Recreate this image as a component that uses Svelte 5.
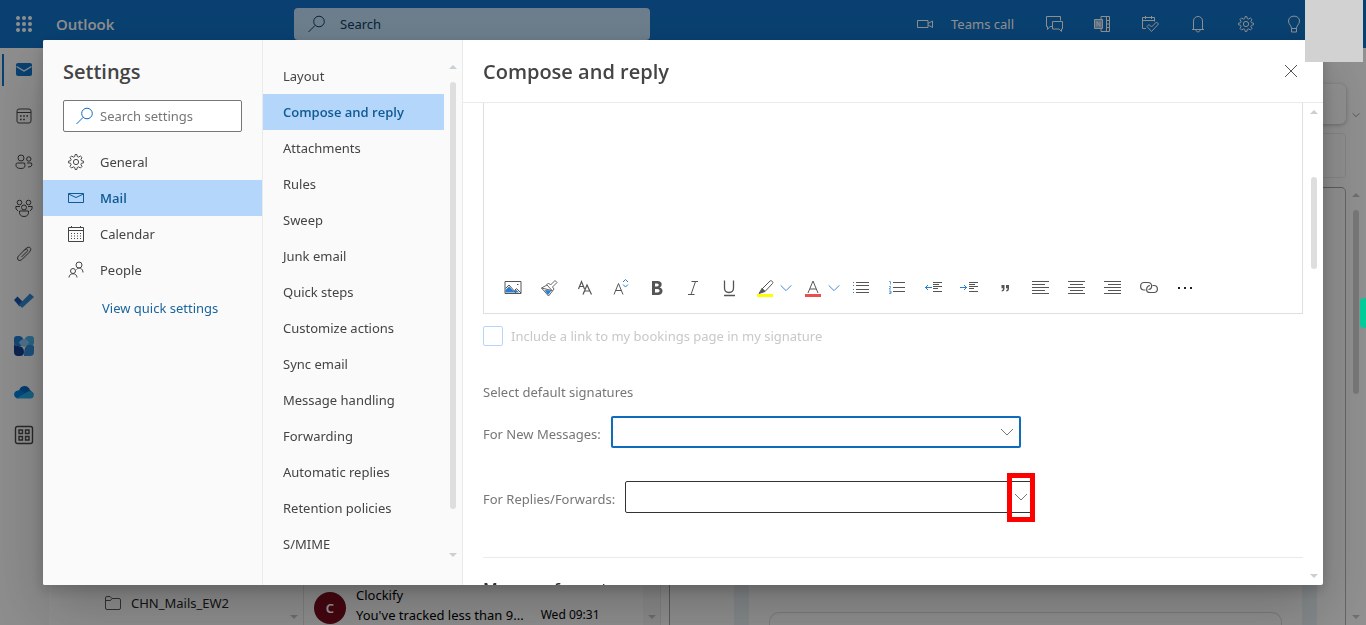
<script lang="ts">
	interface NavItem {
		label: string;
		icon?: string;
	}

	const gear =
		'<path d="M8.2 1.5h1.6l.5 2.1 1.3.5 1.8-1.1 1.6 1.6-1.1 1.8.5 1.3 2.1.5v1.6l-2.1.5-.5 1.3 1.1 1.8-1.6 1.6-1.8-1.1-1.3.5-.5 2.1H8.2l-.5-2.1-1.3-.5-1.8 1.1L3 13.400l1.1-1.8-.5-1.3-2.1-.5V8.200l2.1-.5.5-1.300L3 4.600 4.600 3l1.800 1.100 1.300-.5z"/><circle cx="9" cy="9" r="2.600"/>';

	// Every icon sits on an 18 x 18 grid and inherits its stroke
	const icons: Record<string, string> = {
		gear,
		search: '<circle cx="11" cy="6.500" r="5.300"/><path d="M7.200 10.300 .5 17"/>',
		mail: '<path d="M1.500 4.500h15v9h-15zM1.500 5l7.500 3.500 7.500-3.500"/>',
		calendar:
			'<path d="M1.500 2.500h15v14h-15zM1.500 5.500h15M4.500 1v2M13.500 1v2"/><path d="M4 8.500h11M4 11h11M4 13.500h11" stroke-dasharray="1 2"/>',
		people:
			'<circle cx="12" cy="4" r="3"/><circle cx="6" cy="10" r="2.500"/><path d="M2 16.500c0-5 8-5 8 0M9.500 8.500c2-2.500 6.500-1.500 6.500 3"/>',
		close: '<path d="m3 3 12 12M15 3 3 15"/>',
		chevron: '<path d="m3 6 6 6 6-6"/>',
		video: '<path d="M1.500 5.500H12v7H1.500zM12 8.500l4.500-2.500v6.500L12 10"/>',
		chat: '<path d="M7 11.500H5l-2.500 3v-3h-1v-10h14v4M7.500 6.500h10v7.500h-1v2.500L14 14H7.500z"/>',
		onenote:
			'<path d="M8 4V1.500h8.500v15H8V14M13.500 1.500v15M14 5.500h2.500M14 9h2.500M14 12.500h2.500"/><path d="M1.500 4.500h8v9h-8z" fill="currentColor" fill-opacity=".55"/><path d="M4 11.500v-5l3 5v-5"/>',
		todo: '<path d="M5 13.500H1.500v-11h12v4M1.500 5.500h12M4.500 1v3M10.500 1v3M6 11.500l2-2 2.500 2.500 5-5L17.500 9l-7 7.500z"/>',
		bell: '<path d="M3 14.500h12M4.500 14.500V6c0-6 9-6 9 0v8.500M7 15c0 2.500 4 2.500 4 0"/>',
		bulb: '<path d="M6.500 13.500c0-3-3-4-3-7.500 0-6.500 11-6.500 11 0 0 3.500-3 4.500-3 7.500zM6.500 13.500v3.500h5v-3.500"/>',
		railMail:
			'<rect x="1" y="2" width="16" height="13" rx="2" fill="#0f6cbd" stroke="none"/><path d="m1.500 5.500 7.500 4.500 7.500-4.500" stroke="#ebebeb" stroke-width="1.300"/>',
		railCalendar:
			'<rect x="2" y="2" width="14" height="14" rx="2"/><path d="M2 5.500h14"/><path d="M5 9h8.500M5 12.500h6" stroke-width="1.600" stroke-dasharray="1.600 1.600"/>',
		railPeople:
			'<circle cx="6" cy="5" r="3"/><circle cx="13.800" cy="6" r="2.200"/><path d="M2.500 10h7q2 5.500-3.500 5.500T1 11.500Q1 10 2.500 10zM12 10h4.500q1.500 4-3.500 4"/>',
		railGroups:
			'<circle cx="4.500" cy="3.500" r="2.300"/><circle cx="13.500" cy="3.500" r="2.300"/><circle cx="9" cy="8.500" r="2.500"/><path d="M4.500 12h9q.500 5.500-4.500 5.500T4.500 12zM5 7.500H.8q-.5 3 2.200 4.500M13 7.500h4.200q.5 3-2.200 4.500"/>',
		clip: '<path d="M6.500 12 12 6.500c1.500-1.500-.5-3.500-2-2L4 10.500C.5 14 4 17.500 7.500 14l6.500-6.500C18 3.500 14.500 0 10.500 4L9 5.500"/>',
		check:
			'<g stroke="none"><path d="m-1 9 3.500-3.500L8 11l-3.500 4.500z" fill="#174ea6"/><path d="m4 13.500 11-11L19 6 7 17z" fill="#2f80c8"/></g>',
		viva: '<g stroke="none"><path d="M2-1h2c4 0 5 4 5 10H3q-4 0-4-4V2q0-3 3-3z" fill="#1f74c8"/><path d="M16-1h-2c-4 0-5 4-5 10h6q4 0 4-4V2q0-3-3-3z" fill="#45a8dc"/><path d="M17 8h-3c-4 0-5 4-5 11h6q4 0 4-4V9z" fill="#2e86d0"/><path d="M-1 6v9q0 4 4 4h2q4 0 4-4 0-6-6-6-4 0-4-3z" fill="#123c86"/><path d="M4 5q5-6 10 0-1 4-5 5-4-1-5-5z" fill="#83bfe6"/></g>',
		cloud:
			'<g stroke="none"><path d="M4 8c1-6 9-7 11-1l4 4-13 3z" fill="#0364b8"/><path d="M3.500 15.500C-2 15.500-2.500 8 3 7.500c4-1 5 1.500 8 3z" fill="#0078d4"/><path d="m2 15 11-6.500c6-1.500 8 6 3 7H4z" fill="#28a0d8"/></g>',
		apps: '<rect x=".500" y=".500" width="17" height="17" rx="2" stroke-width="1.400"/><path d="M4 4h3.500v3.500H4zM10.500 4H14v3.500h-3.500zM4 10.500h3.500V14H4zM10.500 10.500H14V14h-3.500z" stroke-width="1.400"/>',
		folder: '<path d="M1.500 4q0-1.500 1.500-1.500h3l2 2h7q1.500 0 1.500 1.500v8q0 1.500-1.500 1.500H3q-1.500 0-1.500-1.500zM1.500 6.500h5l1.500-2"/>',
		picture:
			'<path d="M1.500 13.500V11l3.500-3.500 5 5 2-2 3 3z" fill="#2b7cd3" stroke="none"/><path d="M1 2.500h16v12H1zM1.500 9.500 5 6l7 8M10.500 11.500l2-2 4.500 4.500"/><path d="M13 5.500h1.500"/>',
		painter:
			'<path d="m4.500 11 7 .5L8 16z" fill="#2b7cd3" stroke="none"/><path d="m1.500 9 5.500-3 5.500 6L8.500 17zM1.500 9l10.500 2.500M6.500 6l2-2 2 2L15 1.500 17 3.500l-4.500 4.500 1.500 2-1.500 2" stroke-width=".9"/>',
		bold: '<path d="M4 2h5.500c5.500 0 5 5.700 2 6.500 4.500.8 4 7.500-1.500 7.500H4zM7 4.500v3h2c2.300 0 2.300-3 0-3zm0 5.500v3.500h2.300c3 0 3-3.500 0-3.500z" fill="currentColor" fill-rule="evenodd" stroke="none"/>',
		italic: '<path d="M7.500 2.500H14M4 15.500h6.500M11.500 2.500l-4.500 13"/>',
		underline: '<path d="M4.500 1.500V9c0 6 9 6 9 0V1.500M4 16.500h11" stroke-width="1.300"/>',
		fontName: '<path d="m2.500 10 3-7.500 3 7.500M3.500 7.500h4M7 15.500l4-9.500 4.500 9.500M8.500 12h5.500" stroke-width="1.200"/>',
		fontSize:
			'<path d="m2 15.500 4.500-11 4.500 11M3.500 11.500h6"/><path d="M11 3 13.500.5 16 3M11 5.500 13.500 8 16 5.500" stroke="#2b7cd3"/>',
		highlight:
			'<path d="M1 15h16v3H1z" fill="#ff0" stroke="none"/><path d="m6 10 8-8c1-1 4 1 2.500 2.500L9 12.500z"/><path d="m6 9.500-3 5 6-2z" fill="currentColor"/>',
		fontColor: '<path d="M1 15h16v3H1z" fill="#e8504f" stroke="none"/><path d="M4 14 9 2l5 12M6 10h6"/>',
		bullets:
			'<path d="M4 3.500h13M4 6.500h13M4 10.500h13M4 13.500h13"/><path d="M1 3.500h1M1 6.500h1M1 10.500h1M1 13.500h1" stroke="#2b7cd3"/>',
		numbers:
			'<path d="M5 3.500h12M5 8.500h12M5 12.500h12"/><path d="M1 2.500h1.500v3M1 7.500h1.500v1L1 10h2M1 12h2v1.200H1.500M3 13v1.500H1" stroke="#2b7cd3" stroke-width=".700"/>',
		outdent:
			'<path d="M9 3.500h9M9 5.500h6M9 7.500h9M9 9.500h5M9 12.500h9"/><path d="M8 8.500H1M4 6 1.500 8.500 4 11" stroke="#2b7cd3"/>',
		indent:
			'<path d="M9 3.500h9M9 5.500h6M9 7.500h9M9 9.500h5M9 12.500h9"/><path d="M0 8.500h7M4 6l2.500 2.500L4 11" stroke="#2b7cd3"/>',
		quote:
			'<path d="M5.500 6h3v3.500c0 2-1 3-2.800 3v-1.200c1 0 1.300-1 1.300-2H5.500zM10 6h3v3.500c0 2-1 3-2.800 3v-1.200c1 0 1.300-1 1.300-2H10z" fill="currentColor" stroke="none"/>',
		left: '<path d="M0 2.500h17M0 5.500h13M0 8.500h17M0 11.500h13M0 14.500h17"/>',
		center: '<path d="M0 2.500h17M2 5.500h13M0 8.500h17M2 11.500h13M0 14.500h17"/>',
		right: '<path d="M0 2.500h17M4 5.500h13M0 8.500h17M4 11.500h13M0 14.500h17"/>',
		link: '<path d="M5.500 11H4c-4.500 0-4.500-7.500 0-7.500h4c4.500 0 5 6.500.5 7M12.500 6.500H14c4.500 0 4.500 7 0 7h-4c-4.500 0-4.500-6 0-7" stroke-width="1.200"/>',
		more: '<path d="M2 8h2v2H2zM8 8h2v2H8zM14 8h2v2h-2z" fill="#212121" stroke="none"/>'
	};

	const categories: NavItem[] = [
		{ label: 'General', icon: 'gear' },
		{ label: 'Mail', icon: 'mail' },
		{ label: 'Calendar', icon: 'calendar' },
		{ label: 'People', icon: 'people' }
	];

	const sections = [
		'Layout',
		'Compose and reply',
		'Attachments',
		'Rules',
		'Sweep',
		'Junk email',
		'Quick steps',
		'Customize actions',
		'Sync email',
		'Message handling',
		'Forwarding',
		'Automatic replies',
		'Retention policies',
		'S/MIME'
	];

	const headerActions = [
		{ icon: 'chat', title: 'Chat' },
		{ icon: 'onenote', title: 'OneNote feed' },
		{ icon: 'todo', title: 'My Day' },
		{ icon: 'bell', title: 'Notifications' },
		{ icon: 'gear', title: 'Settings' },
		{ icon: 'bulb', title: 'Tips' }
	];

	const rail = [
		{ icon: 'railMail', title: 'Mail' },
		{ icon: 'railCalendar', title: 'Calendar' },
		{ icon: 'railPeople', title: 'People' },
		{ icon: 'railGroups', title: 'Groups' },
		{ icon: 'clip', title: 'Files' },
		{ icon: 'check', title: 'To Do' },
		{ icon: 'viva', title: 'Viva Engage' },
		{ icon: 'cloud', title: 'OneDrive' },
		{ icon: 'apps', title: 'More apps' }
	];

	const tools = [
		{ icon: 'picture', title: 'Insert pictures inline' },
		{ icon: 'painter', title: 'Format painter' },
		{ icon: 'fontName', title: 'Font' },
		{ icon: 'fontSize', title: 'Font size' },
		{ icon: 'bold', title: 'Bold' },
		{ icon: 'italic', title: 'Italic' },
		{ icon: 'underline', title: 'Underline' },
		{ icon: 'highlight', title: 'Highlight', menu: true },
		{ icon: 'fontColor', title: 'Font color', menu: true },
		{ icon: 'bullets', title: 'Bullets' },
		{ icon: 'numbers', title: 'Numbering' },
		{ icon: 'outdent', title: 'Decrease indent' },
		{ icon: 'indent', title: 'Increase indent' },
		{ icon: 'quote', title: 'Quote' },
		{ icon: 'left', title: 'Align left' },
		{ icon: 'center', title: 'Align center' },
		{ icon: 'right', title: 'Align right' },
		{ icon: 'link', title: 'Insert link' },
		{ icon: 'more', title: 'More formatting options' }
	];

	let category = $state('Mail');
	let section = $state('Compose and reply');
	let newSignature = $state('');
	let replySignature = $state('');
</script>

{#snippet icon(name: string, size = 18)}
	<svg width={size} height={size} viewBox="0 0 18 18" fill="none" stroke="currentColor" overflow="visible" aria-hidden="true">
		{@html icons[name]}
	</svg>
{/snippet}

{#snippet scrollbar(before: number, thumb: number, after: number)}
	<div class="scrollbar" aria-hidden="true">
		<span class="arrow up"></span>
		<span style="flex-grow: {before}"></span>
		<span class="thumb" style="flex-grow: {thumb}"></span>
		<span style="flex-grow: {after}"></span>
		<span class="arrow down"></span>
	</div>
{/snippet}

<div class="app">
	<header class="topbar">
		<button class="waffle" aria-label="App launcher">
			{#each Array(9) as _}<i></i>{/each}
		</button>
		<span class="brand">Outlook</span>
		<label class="topsearch">
			{@render icon('search')}
			<input type="text" placeholder="Search" aria-label="Search" />
		</label>
		<div class="actions">
			<button class="teams">{@render icon('video')}<span>Teams call</span></button>
			{#each headerActions as action}
				<button class="action" aria-label={action.title}>{@render icon(action.icon)}</button>
			{/each}
		</div>
	</header>

	<div class="body">
		<nav class="rail" aria-label="Apps">
			{#each rail as app, i}
				<button class:current={i === 0} aria-label={app.title}>{@render icon(app.icon)}</button>
			{/each}
		</nav>
		<div class="workspace">
			<div class="ribbon">
				<div class="ribbon-box"></div>
				<button aria-label="Ribbon options">{@render icon('chevron', 10)}</button>
			</div>
			<div class="notice"></div>
			<div class="panes">
				<div class="folders">
					<div class="folder">{@render icon('folder')}<span>CHN_Mails_EW2</span></div>
					<span class="arrow down"></span>
				</div>
				<div class="messages">
					<div class="message">
						<span class="avatar">C</span>
						<div class="summary">
							<div class="sender">Clockify</div>
							<div class="subject">
								<span>You've tracked less than 9...</span>
								<time>Wed 09:31</time>
							</div>
						</div>
					</div>
					<div class="gutter"><span class="arrow down"></span></div>
				</div>
				<div class="reading">
					<div class="strip"></div>
					<div class="mail-card"></div>
					<div class="strip"></div>
				</div>
				{@render scrollbar(13, 184, 220)}
			</div>
		</div>
	</div>
</div>

<div class="overlay">
	<div class="dialog" role="dialog" aria-label="Settings">
		<aside class="categories">
			<h2>Settings</h2>
			<label class="search">
				{@render icon('search')}
				<input type="text" placeholder="Search settings" aria-label="Search settings" />
			</label>
			<nav>
				{#each categories as item}
					<button class:selected={category === item.label} onclick={() => (category = item.label)}>
						{@render icon(item.icon ?? '')}
						<span>{item.label}</span>
					</button>
				{/each}
			</nav>
			<a href="#quick">View quick settings</a>
		</aside>

		<div class="sections">
			<nav>
				{#each sections as name}
					<button class:selected={section === name} onclick={() => (section = name)}>{name}</button>
				{/each}
			</nav>
			{@render scrollbar(13, 427, 44)}
		</div>

		<main>
			<header>
				<h2>Compose and reply</h2>
				<button aria-label="Close">{@render icon('close')}</button>
			</header>
			<div class="scroller">
				<div class="content">
					<div class="editor">
						<div class="signature" contenteditable="true" role="textbox" tabindex="0" aria-label="Signature"></div>
						<div class="toolbar" role="toolbar">
							{#each tools as tool}
								<button class:menu={tool.menu} aria-label={tool.title}>
									{@render icon(tool.icon)}
									{#if tool.menu}<span class="caret">{@render icon('chevron', 16)}</span>{/if}
								</button>
							{/each}
						</div>
					</div>
					<label class="bookings">
						<input type="checkbox" disabled />
						<span>Include a link to my bookings page in my signature</span>
					</label>
					<p>Select default signatures</p>
					<div class="field">
						<label for="new-signature">For New Messages:</label>
						<div class="dropdown active">
							<select id="new-signature" bind:value={newSignature}><option value=""></option></select>
							{@render icon('chevron')}
						</div>
					</div>
					<div class="field">
						<label for="reply-signature">For Replies/Forwards:</label>
						<div class="dropdown">
							<select id="reply-signature" bind:value={replySignature}><option value=""></option></select>
							{@render icon('chevron')}
							<div class="marker"></div>
						</div>
					</div>
					<h3>Message format</h3>
				</div>
				{@render scrollbar(63, 92, 305)}
			</div>
		</main>
	</div>
</div>

<div class="blank"></div>
<div class="side-tab"></div>

<style>
	:global(body) {
		overflow: hidden;
		font-family: 'Noto Sans', 'Open Sans', sans-serif;
		font-size: 13px;
		color: #444;
	}

	* {
		box-sizing: border-box;
	}

	button,
	input,
	select {
		margin: 0;
		padding: 0;
		border: 0;
		background: none;
		font: inherit;
		color: inherit;
	}

	h2,
	h3,
	p {
		margin: 0;
	}

	svg {
		flex: none;
		display: block;
	}

	.app {
		display: flex;
		flex-direction: column;
		height: 100vh;
		overflow: hidden;
		background: #f0f0f0;
	}

	.topbar {
		display: flex;
		flex: none;
		align-items: center;
		height: 48px;
		background: #0f6cbd;
		color: #eee;
	}

	.waffle {
		display: grid;
		grid-template-columns: repeat(3, 4px);
		gap: 2px;
		place-content: center;
		width: 48px;
		height: 48px;
	}

	.waffle i {
		height: 4px;
		border-radius: 2px;
		background: #eee;
	}

	.brand {
		width: 238px;
		margin-left: 8px;
		font-family: 'Open Sans', sans-serif;
		font-size: 15px;
		font-weight: 600;
	}

	.topsearch {
		display: flex;
		align-items: center;
		gap: 14px;
		width: 356px;
		height: 32px;
		padding: 0 14px;
		border-radius: 4px;
		background: #b5d3eb;
		color: #0c3b5e;
	}

	.topsearch input,
	.search input {
		flex: 1;
		min-width: 0;
		outline: none;
	}

	.topsearch input::placeholder {
		color: #0c3b5e;
		opacity: 1;
	}

	.actions {
		display: flex;
		margin-left: auto;
		padding-right: 48px;
	}

	.teams {
		display: flex;
		align-items: center;
		gap: 17px;
		padding-right: 16px;
	}

	.action {
		display: grid;
		place-items: center;
		width: 48px;
		height: 48px;
	}

	.body {
		display: flex;
		flex: 1;
		min-height: 0;
	}

	.rail {
		display: flex;
		flex-direction: column;
		width: 49px;
		background: #ebebeb;
		color: #424242;
	}

	.rail button {
		display: grid;
		place-items: center;
		width: 48px;
		height: 46px;
		padding: 0 0 2px;
	}

	.rail button:last-child {
		height: 40px;
	}

	.rail .current {
		background: linear-gradient(#0f6cbd, #0f6cbd) 2px 6px / 2px 32px no-repeat;
	}

	.workspace {
		display: flex;
		flex: 1;
		flex-direction: column;
		gap: 9px;
		min-width: 0;
		padding-top: 36px;
	}

	.ribbon {
		display: flex;
		align-items: flex-end;
		height: 40px;
	}

	.ribbon-box {
		flex: 1;
		height: 100%;
		border-radius: 6px;
		background: #f2f2f2;
		box-shadow: 0 1px 4px #0004;
	}

	.ribbon button {
		width: 20px;
		padding: 4px 5px;
	}

	.notice {
		height: 45px;
		margin-right: 20px;
		border: 1px solid #ddd;
		border-radius: 4px;
	}

	.panes {
		display: flex;
		flex: 1;
		min-height: 0;
	}

	.folders,
	.messages {
		display: flex;
		align-items: flex-end;
		justify-content: space-between;
		color: #222;
	}

	.folders {
		width: 255px;
		padding: 0 5px 6px 55px;
		border-right: 1px solid #d8d8d8;
	}

	.folder {
		display: flex;
		align-items: center;
		gap: 9px;
		height: 32px;
	}

	.folder svg {
		color: #555;
	}

	.messages {
		width: 366px;
		border-right: 1px solid #999;
		color: #000;
	}

	.message {
		display: flex;
		gap: 10px;
		padding-left: 10px;
		line-height: 20px;
	}

	.avatar {
		display: grid;
		place-items: center;
		width: 32px;
		height: 32px;
		margin-top: 7px;
		border-radius: 50%;
		background: #750b1c;
		color: #fff;
		font-weight: 600;
	}

	.subject {
		display: flex;
		gap: 17px;
		white-space: nowrap;
	}

	.subject time {
		font-size: 12px;
	}

	.gutter {
		display: flex;
		align-items: flex-end;
		justify-content: center;
		width: 18px;
		height: 100%;
		margin-right: 8px;
		padding-bottom: 6px;
		border-right: 1px solid #ddd;
		background: #e9e9e9;
	}

	.reading {
		display: flex;
		flex: 1;
		align-items: flex-end;
		gap: 20px;
		padding: 0 28px 0 64px;
		border-top: 1px solid #999;
		border-right: 1px solid #aaa;
		border-top-right-radius: 5px;
	}

	.strip {
		width: 15px;
		height: 100%;
		background: #dde5e8;
	}

	.mail-card {
		flex: 1;
		height: 13px;
		border: 1px solid #d0d0d0;
		border-bottom: 0;
		border-radius: 10px 10px 0 0;
	}

	.scrollbar {
		display: flex;
		flex: none;
		flex-direction: column;
		align-items: center;
		width: 18px;
	}

	.panes .scrollbar {
		width: 20px;
		padding: 6px 0;
	}

	.thumb {
		width: 6px;
		border-radius: 3px;
		background: #dedede;
	}

	.panes .thumb {
		background: #c8c8c8;
	}

	.arrow {
		border: 4px solid transparent;
	}

	.arrow.up {
		border-top: 0;
		border-bottom-color: #c8d0d5;
	}

	.arrow.down {
		border-bottom: 0;
		border-top-color: #c8d0d5;
	}

	.app .arrow.up {
		border-bottom-color: #b5babc;
	}

	.app .arrow.down {
		border-top-color: #b5babc;
	}

	.overlay {
		position: fixed;
		inset: 0;
		display: flex;
		padding: 40px 43px;
		background: rgba(0, 0, 0, 0.4);
	}

	.dialog {
		display: flex;
		flex: 1;
		min-width: 0;
		border-radius: 2px;
		overflow: hidden;
		background: #fff;
		box-shadow:
			0 26px 58px rgba(0, 0, 0, 0.22),
			0 5px 14px rgba(0, 0, 0, 0.18);
	}

	h2 {
		font-family: 'Open Sans', sans-serif;
		font-size: 20px;
		font-weight: 600;
		line-height: 28px;
	}

	.categories {
		flex: none;
		width: 220px;
		padding-top: 18px;
		border-right: 1px solid #eaeaea;
		background: #fafafa;
	}

	.categories h2 {
		margin-left: 20px;
	}

	.search {
		display: flex;
		align-items: center;
		gap: 6px;
		height: 32px;
		margin: 14px 20px 12px;
		padding: 0 12px;
		border: 1px solid #777;
		border-radius: 2px;
		background: #fff;
		color: #0f6cbd;
	}

	.search input::placeholder {
		color: #767676;
		opacity: 1;
	}

	.categories nav button {
		display: flex;
		align-items: center;
		gap: 15px;
		width: 100%;
		height: 36px;
		padding-left: 24px;
	}

	.dialog .selected {
		background: #b4d6fa;
		color: #115a93;
		font-family: 'Open Sans', sans-serif;
		font-weight: 600;
	}

	.categories a {
		display: block;
		margin: 10px 0 0 59px;
		color: #1a659e;
		line-height: 20px;
		text-decoration: none;
	}

	.sections {
		display: flex;
		flex: none;
		width: 200px;
		border-right: 1px solid #eaeaea;
		background: #fafafa;
	}

	.sections nav {
		flex: 1;
		padding-top: 18px;
	}

	.sections nav button {
		display: block;
		width: 100%;
		height: 36px;
		padding-left: 20px;
		text-align: left;
	}

	.sections .scrollbar {
		padding: 25px 0 28px;
	}

	main {
		display: flex;
		flex: 1;
		flex-direction: column;
		min-width: 0;
	}

	main header {
		display: flex;
		flex: none;
		justify-content: space-between;
		height: 63px;
		padding: 18px 23px 16px 20px;
		border-bottom: 1px solid #eaeaea;
	}

	main header button {
		color: #555;
		padding-bottom: 2px;
	}

	.scroller {
		display: flex;
		flex: 1;
		min-height: 0;
		overflow: hidden;
	}

	.content {
		flex: 1;
		padding-left: 20px;
		color: #767676;
	}

	.scroller .scrollbar {
		width: 20px;
		padding: 7px 0;
		padding-left: 2px;
	}

	.editor {
		display: flex;
		flex-direction: column;
		height: 211px;
		border: 1px solid #dfdfdf;
		border-top: 0;
	}

	.signature {
		flex: 1;
		outline: none;
	}

	.toolbar {
		display: flex;
		align-items: center;
		height: 50px;
		padding-left: 11px;
		color: #555;
	}

	.toolbar button {
		display: flex;
		align-items: center;
		gap: 4px;
		height: 36px;
		padding: 0 9px;
	}

	.toolbar .menu {
		padding-right: 1px;
	}

	.caret {
		color: #2b7cd3;
	}

	.bookings {
		display: flex;
		align-items: center;
		gap: 8px;
		height: 20px;
		margin-top: 12px;
		color: #c8c8c8;
	}

	.bookings input {
		appearance: none;
		width: 20px;
		height: 20px;
		border: 1px solid #b4d6fa;
		border-radius: 2px;
	}

	p {
		margin: 36px 0 14px;
		line-height: 20px;
	}

	.field {
		display: flex;
		align-items: center;
		gap: 10px;
		height: 32px;
		margin-bottom: 33px;
	}

	.field label {
		padding-top: 4px;
	}

	.dropdown {
		position: relative;
		width: 410px;
		height: 32px;
	}

	.dropdown select {
		appearance: none;
		width: 100%;
		height: 100%;
		border: 1px solid #333;
		border-radius: 2px;
		background: #fff;
	}

	.dropdown.active select {
		border: 2px solid #0f6cbd;
	}

	.dropdown svg {
		position: absolute;
		top: 7px;
		right: 5px;
		pointer-events: none;
	}

	.marker {
		position: absolute;
		top: -8px;
		right: 0;
		width: 28px;
		height: 49px;
		border: 5px solid #f00;
		pointer-events: none;
	}

	h3 {
		margin-top: 44px;
		padding-top: 19px;
		border-top: 1px solid #eaeaea;
		color: #333;
		font-family: 'Open Sans', sans-serif;
		font-size: 16px;
		font-weight: 600;
		line-height: 24px;
	}

	.blank {
		position: fixed;
		top: 0;
		right: 3px;
		width: 58px;
		height: 62px;
		background: #d2d2d2;
	}

	.side-tab {
		position: fixed;
		top: 298px;
		right: 0;
		width: 6px;
		height: 30px;
		border-radius: 4px 0 0 4px;
		background: #00cc99;
	}
</style>
